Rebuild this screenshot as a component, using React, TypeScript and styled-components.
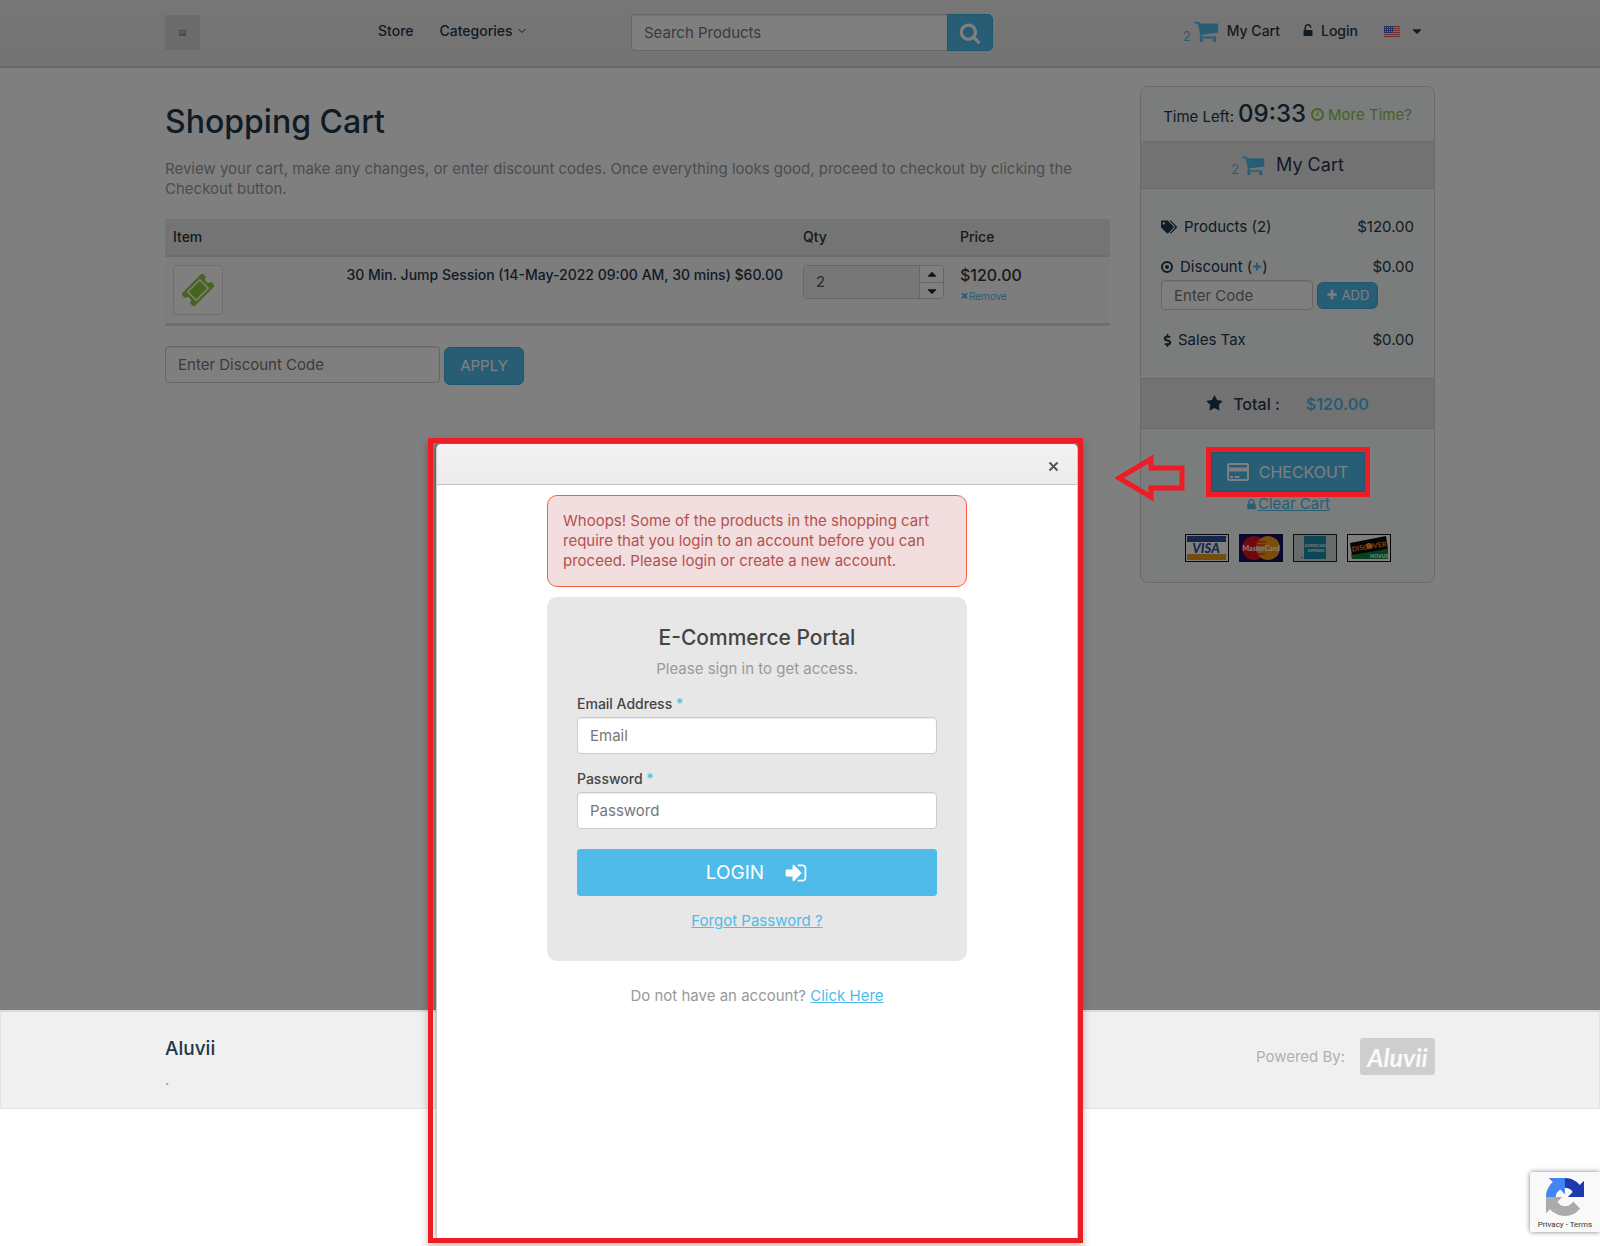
import React from "react";
import styled, { createGlobalStyle } from "styled-components";
import { FaCaretDown, FaCaretUp, FaDollarSign, FaTags } from "react-icons/fa";

const color = {
  ink: "#1e364a",
  text: "#333",
  muted: "#999",
  blue: "#4fbbea",
  blueEdge: "#3aaede",
  green: "#8cc63f",
  line: "#d4d4d4",
  mark: "#ee1c24",
};

const Global = createGlobalStyle`
  *, *::before, *::after { box-sizing: border-box; }
  body {
    margin: 0;
    background: #fff;
    color: ${color.muted};
    font: 400 15px/20px Inter, "Liberation Sans", sans-serif;
  }
  h1, h2, p { margin: 0; font-weight: 400; }
  input, button, select { font: inherit; }
  a { color: ${color.blue}; }
`;

/* ---------- icons ---------- */

const glyphs = {
  cart: "M640 1536q0 52-38 90t-90 38-90-38-38-90 38-90 90-38 90 38 38 90zm896 0q0 52-38 90t-90 38-90-38-38-90 38-90 90-38 90 38 38 90zm128-1088v512q0 24-16.500 42.500t-40.500 21.500l-1044 122q13 60 13 70 0 16-24 64h920q26 0 45 19t19 45-19 45-45 19h-1024q-26 0-45-19t-19-45q0-11 8-31.500t16-36 21.500-40 15.500-29.500l-177-823h-204q-26 0-45-19t-19-45 19-45 45-19h256q16 0 28.500 6.500t19.500 15.500 13 24.500 8 26 5.500 29.500 4.500 26h1201q26 0 45 19t19 45z",
  search:
    "M1216 832q0-185-131.500-316.500t-316.500-131.500-316.500 131.500-131.500 316.500 131.500 316.500 316.500 131.500 316.500-131.500 131.500-316.500zm512 832q0 52-38 90t-90 38q-54 0-90-38l-343-342q-179 124-399 124-143 0-273.500-55.500t-225-150-150-225-55.500-273.500 55.500-273.500 150-225 225-150 273.500-55.500 273.500 55.500 225 150 150 225 55.500 273.500q0 220-124 399l343 343q37 37 37 90z",
  signIn:
    "M1312 896q0 26-19 45l-544 544q-19 19-45 19t-45-19-19-45v-288h-448q-26 0-45-19t-19-45v-384q0-26 19-45t45-19h448v-288q0-26 19-45t45-19 45 19l544 544q19 19 19 45zm352-352v704q0 119-84.500 203.500t-203.500 84.500h-320q-13 0-22.500-9.500t-9.500-22.500q0-4-1-20t-.5-26.500 3-23.500 10-19.500 20.500-6.500h320q66 0 113-47t47-113v-704q0-66-47-113t-113-47h-312l-11.500-1-11.500-3-8-5.500-7-9-2-13.500q0-4-1-20t-.5-26.500 3-23.500 10-19.500 20.500-6.500h320q119 0 203.500 84.500t84.500 203.500z",
  star: "M1728 647q0 22-26 48l-363 354 86 500q1 7 1 20 0 21-10.500 35.500t-30.500 14.500q-19 0-40-12l-449-236-449 236q-22 12-40 12-21 0-31.500-14.500t-10.500-35.500q0-6 2-20l86-500-364-354q-25-27-25-48 0-37 56-46l502-73 225-455q19-41 49-41t49 41l225 455 502 73q56 9 56 46z",
  lock: "M640 768h512v-192q0-106-75-181t-181-75-181 75-75 181v192zm832 96v576q0 40-28 68t-68 28h-960q-40 0-68-28t-28-68v-576q0-40 28-68t68-28h32v-192q0-184 132-316t316-132 316 132 132 316v192h32q40 0 68 28t28 68z",
  unlock:
    "M1376 768q40 0 68 28t28 68v576q0 40-28 68t-68 28h-960q-40 0-68-28t-28-68v-576q0-40 28-68t68-28h32v-320q0-185 131.500-316.500t316.500-131.500 316.500 131.500 131.500 316.500q0 26-19 45t-45 19h-64q-26 0-45-19t-19-45q0-106-75-181t-181-75-181 75-75 181v320h736z",
  plus: "M1600 736v192q0 40-28 68t-68 28h-416v416q0 40-28 68t-68 28h-192q-40 0-68-28t-28-68v-416h-416q-40 0-68-28t-28-68v-192q0-40 28-68t68-28h416v-416q0-40 28-68t68-28h192q40 0 68 28t28 68v416h416q40 0 68 28t28 68z",
  times:
    "M1490 1322q0 40-28 68l-136 136q-28 28-68 28t-68-28l-294-294-294 294q-28 28-68 28t-68-28l-136-136q-28-28-28-68t28-68l294-294-294-294q-28-28-28-68t28-68l136-136q28-28 68-28t68 28l294 294 294-294q28-28 68-28t68 28l136 136q28 28 28 68t-28 68l-294 294 294 294q28 28 28 68z",
  clock:
    "M1024 544v448q0 14-9 23t-23 9h-320q-14 0-23-9t-9-23v-64q0-14 9-23t23-9h224v-352q0-14 9-23t23-9h64q14 0 23 9t9 23zm416 352q0-148-73-273t-198-198-273-73-273 73-198 198-73 273 73 273 198 198 273 73 273-73 198-198 73-273zm224 0q0 209-103 385.500t-279.500 279.500-385.500 103-385.500-103-279.500-279.500-103-385.500 103-385.500 279.500-279.500 385.500-103 385.500 103 279.500 279.500 103 385.500z",
};

function Icon({ name, size, fill = "currentColor" }: { name: keyof typeof glyphs; size: number; fill?: string }) {
  return (
    <svg width={size} height={size} viewBox="0 0 1792 1792" fill={fill} aria-hidden="true">
      <path d={glyphs[name]} />
    </svg>
  );
}

const DotCircle = () => (
  <svg width="12" height="12" viewBox="0 0 12 12" aria-hidden="true">
    <circle cx="6" cy="6" r="5" fill="none" stroke={color.ink} strokeWidth="2" />
    <circle cx="6" cy="6" r="2" fill={color.ink} />
  </svg>
);

const Chevron = () => (
  <svg width="10" height="6" viewBox="0 0 10 6" fill="none" stroke={color.ink} aria-hidden="true">
    <path d="M1.500 1L5 4.500L8.500 1" />
  </svg>
);

const CreditCard = () => (
  <svg width="22" height="18" viewBox="0 0 22 18" aria-hidden="true">
    <rect x="1" y="1" width="20" height="16" rx="1.500" fill="none" stroke="#fff" strokeWidth="2" />
    <path d="M1 6.500h20" stroke="#fff" strokeWidth="4" />
    <path d="M3 14h3M7.500 14h5" stroke="#fff" strokeWidth="2" />
  </svg>
);

const Ticket = () => (
  <svg width="32" height="32" viewBox="0 0 32 32" aria-hidden="true">
    <g transform="rotate(-45 16 16)">
      <path
        fill={color.green}
        d="M3.500 7h25a2.500 2.500 0 0 1 2.500 2.500v3a3.500 3.500 0 0 0 0 7v3a2.500 2.500 0 0 1-2.500 2.500h-25a2.500 2.500 0 0 1-2.500-2.500v-3a3.500 3.500 0 0 0 0-7v-3a2.500 2.500 0 0 1 2.500-2.500z"
      />
      <rect x="7.500" y="10" width="17" height="12" fill="none" stroke="#fff" strokeWidth="1.500" />
    </g>
  </svg>
);

const BrokenImage = () => (
  <svg width="7" height="6" viewBox="0 0 7 6" aria-hidden="true">
    <rect x=".5" y=".5" width="6" height="5" fill="#c4c4c4" stroke="#999" />
    <path d="M1 5l2-2 1 1 1-1 1.500 2z" fill="#888" />
  </svg>
);

const Flag = () => (
  <svg width="16" height="11" viewBox="0 0 16 11" aria-hidden="true">
    <rect width="16" height="11" fill="#f3e3e3" />
    <path d="M0 .5h16M0 2.500h16M0 4.500h16M0 6.500h16M0 8.500h16M0 10.500h16" stroke="#dd5a5a" />
    <rect width="9" height="7" fill="#3f62c8" />
    <path d="M1 1.500h7M1 3.500h7M1 5.500h7" stroke="#e4eafc" strokeDasharray="1 1" />
  </svg>
);

const RecaptchaMark = () => (
  <svg width="38" height="38" viewBox="0 0 64 64" aria-hidden="true">
    <path fill="#1c3aa9" d="M64 31.955l-.033-1.370V4.687l-7.160 7.160C50.948 4.674 42.033.093 32.050.093c-10.400 0-19.622 4.960-25.458 12.640l11.736 11.860a15.550 15.550 0 0 1 4.754-5.334c2.050-1.600 4.952-2.906 8.968-2.906.485 0 .860.057 1.135.163 4.976.393 9.288 3.140 11.828 7.124l-8.307 8.307L64 31.953" />
    <path fill="#4285f4" d="M31.862.094l-1.370.033H4.594l7.160 7.160C4.580 13.147 0 22.060 0 32.046c0 10.400 4.960 19.622 12.640 25.458L24.500 45.768a15.550 15.550 0 0 1-5.334-4.754c-1.600-2.050-2.906-4.952-2.906-8.968 0-.485.057-.860.163-1.135.393-4.976 3.140-9.288 7.124-11.828l8.307 8.307L31.860.095" />
    <path fill="#ababab" d="M.001 32.045l.033 1.370v25.898l7.160-7.160c5.860 7.173 14.774 11.754 24.760 11.754 10.400 0 19.622-4.960 25.458-12.640l-11.736-11.860a15.550 15.550 0 0 1-4.754 5.334c-2.050 1.600-4.952 2.906-8.968 2.906-.485 0-.860-.057-1.135-.163-4.976-.393-9.288-3.140-11.828-7.124l8.307-8.307c-10.522.040-22.400.066-27.295-.005" />
  </svg>
);

const VisaCard = () => (
  <svg width="44" height="28" viewBox="0 0 44 28" role="img" aria-label="Visa">
    <rect x=".5" y=".5" width="43" height="27" fill="#fff" stroke="#111" />
    <rect x="2" y="2" width="39" height="6" fill="#2a4f9e" />
    <rect x="2" y="20" width="39" height="6" fill="#e59b1c" />
    <text x="21" y="19" textAnchor="middle" fontFamily="Lato, sans-serif" fontSize="13" fontWeight="900" fontStyle="italic" fill="#2a4f9e">VISA</text>
  </svg>
);

const MasterCard = () => (
  <svg width="44" height="28" viewBox="0 0 44 28" role="img" aria-label="MasterCard">
    <rect width="44" height="28" fill="#14145c" />
    <circle cx="15" cy="14" r="12" fill="#e0101e" />
    <circle cx="29" cy="14" r="12" fill="#f59a1c" />
    <path d="M18 8h9M17 11h9M17 20h9" stroke="#e0101e" />
    <text x="22" y="17" textAnchor="middle" fontFamily="Lato, sans-serif" fontSize="7" fontWeight="900" fill="#fff">MasterCard</text>
  </svg>
);

const AmexCard = () => (
  <svg width="44" height="28" viewBox="0 0 44 28" role="img" aria-label="American Express">
    <rect x=".5" y=".5" width="43" height="27" fill="#cfd4d6" stroke="#222" />
    <rect x="11" y="2" width="22" height="23" fill="#1c8fa8" />
    <text x="22" y="13" textAnchor="middle" fontFamily="Lato, sans-serif" fontSize="4" fontWeight="700" fill="#e8f4f6">AMERICAN</text>
    <text x="23" y="18" textAnchor="middle" fontFamily="Lato, sans-serif" fontSize="4" fontWeight="700" fill="#e8f4f6">EXPRESS</text>
    <rect x="8" y="23" width="2" height="1" fill="#1c8fa8" />
  </svg>
);

const DiscoverCard = () => (
  <svg width="44" height="28" viewBox="0 0 44 28" role="img" aria-label="Discover Novus">
    <rect x=".5" y=".5" width="43" height="27" fill="#fff" stroke="#111" />
    <path d="M5 25L4 20L41 15V25z" fill="#15803d" />
    <path d="M3 9L39 2L41 15L5 21z" fill="#0a0a0a" />
    <g transform="rotate(-9 22 12)">
      <circle cx="22" cy="12" r="3" fill="#f7b500" />
      <text x="22" y="15" textAnchor="middle" fontFamily="Lato, sans-serif" fontSize="7" fontWeight="900" fill="#f07a30">DISCOVER</text>
    </g>
    <text x="32" y="24" textAnchor="middle" fontFamily="Lato, sans-serif" fontSize="5" fontWeight="900" fill="#fff">NOVUS</text>
  </svg>
);

/* ---------- page frame ---------- */

const Page = styled.div`
  position: relative;
  min-height: 100vh;
  overflow: hidden;
`;

const Shop = styled.div`
  position: relative;
  min-height: calc(100vh - 236px);
`;

const Dimmer = styled.div`
  position: absolute;
  inset: 0;
  z-index: 1;
  background: rgba(0, 0, 0, 0.5);
`;

const Container = styled.div`
  display: flex;
  max-width: 1270px;
  margin: 0 auto;
`;

/* ---------- header ---------- */

const Header = styled.header`
  border-bottom: 2px solid #cfcfcf;
  background: linear-gradient(#ededed, #e6e6e6);
`;

const HeaderRow = styled(Container)`
  height: 66px;
  align-items: flex-start;
`;

const Logo = styled.a`
  display: grid;
  place-items: center;
  width: 35px;
  height: 35px;
  margin-top: 15px;
  background: #d8d8d8;
`;

const Nav = styled.nav`
  display: flex;
  gap: 26px;
  width: 253px;
  margin: 21px 0 0 178px;
`;

const NavLink = styled.a`
  display: flex;
  align-items: center;
  gap: 4px;
  color: ${color.ink};
  font-size: 14px;
  font-weight: 500;
  text-decoration: none;
`;

const Search = styled.form`
  display: flex;
  width: 362px;
  margin-top: 14px;
`;

const TextInput = styled.input`
  width: 100%;
  height: 37px;
  padding: 0 12px;
  border: 1px solid #ccc;
  border-radius: 4px;
  background: #fff;
  box-shadow: inset 0 1px 1px rgba(0, 0, 0, 0.08);
  color: #555;
  &::placeholder {
    color: #777;
    opacity: 1;
  }
`;

const SearchInput = styled(TextInput)`
  flex: 1;
  border-right: 0;
  border-radius: 4px 0 0 4px;
`;

const BlueButton = styled.button`
  display: inline-flex;
  align-items: center;
  justify-content: center;
  border: 1px solid ${color.blueEdge};
  border-radius: 6px;
  background: ${color.blue};
  color: #fff;
  white-space: nowrap;
`;

const SearchButton = styled(BlueButton)`
  width: 46px;
  border-radius: 0 5px 5px 0;
`;

const Account = styled.div`
  display: flex;
  align-items: center;
  margin: 18px 11px 0 auto;
`;

const CartLink = styled.a`
  display: flex;
  align-items: center;
  gap: 7px;
  margin-right: 21px;
  color: ${color.text};
  font-size: 14px;
  font-weight: 500;
  text-decoration: none;
`;

const CartBadge = styled.span`
  display: inline-flex;
  align-items: flex-end;
  gap: 3px;
  color: ${color.blue};
  font-size: 13px;
  font-weight: 400;
  line-height: 16px;
`;

const LoginLink = styled(NavLink)`
  gap: 6px;
  margin-right: 26px;
`;

const LanguageButton = styled.button`
  display: flex;
  align-items: center;
  gap: 10px;
  padding: 0;
  border: 0;
  background: none;
  color: ${color.text};
  font-size: 14px;
`;

/* ---------- cart ---------- */

const Columns = styled(Container)`
  align-items: flex-start;
  gap: 30px;
  padding-top: 18px;
`;

const CartColumn = styled.main`
  flex: 1;
  min-width: 0;
  padding-top: 18px;
`;

const Title = styled.h1`
  color: ${color.ink};
  font-size: 32px;
  font-weight: 500;
  line-height: 36px;
`;

const Intro = styled.p`
  margin: 19px 0 20px;
`;

const Table = styled.table`
  width: 100%;
  border-collapse: collapse;
  border-bottom: 3px solid #dcdcdc;
  background: #fafafa;
  table-layout: fixed;
`;

const HeadCell = styled.th<{ $width?: string }>`
  width: ${(p) => p.$width ?? "auto"};
  height: 37px;
  padding: 0 8px;
  border-bottom: 2px solid #dcdcdc;
  background: #e8e8e8;
  color: ${color.text};
  font-size: 14px;
  font-weight: 500;
  text-align: left;
`;

const Cell = styled.td`
  padding: 8px;
  vertical-align: top;
`;

const ProductName = styled(Cell)`
  padding-right: 12px;
  color: ${color.ink};
  font-size: 14px;
  font-weight: 500;
  text-align: right;
`;

const Thumb = styled.div`
  display: grid;
  place-items: center;
  width: 50px;
  height: 50px;
  border: 1px solid #ddd;
  border-radius: 4px;
  background: #fff;
`;

const Stepper = styled.div`
  display: flex;
  height: 34px;
  overflow: hidden;
  border: 1px solid #ccc;
  border-radius: 4px;
`;

const QtyInput = styled.input`
  flex: 1;
  min-width: 0;
  padding: 0 12px;
  border: 0;
  background: #eee;
  color: #555;
`;

const StepButtons = styled.div`
  display: grid;
  grid-template-rows: 1fr 1fr;
  width: 24px;
  border-left: 1px solid #ccc;
`;

const StepButton = styled.button`
  display: grid;
  place-items: center;
  padding: 0;
  border: 0;
  background: #fff;
  color: #222;
  font-size: 14px;
  line-height: 10px;
  & + & {
    border-top: 1px solid #ccc;
  }
`;

const LinePrice = styled.div`
  color: ${color.text};
  font-size: 16px;
  font-weight: 500;
`;

const RemoveLink = styled.a`
  display: inline-flex;
  align-items: center;
  font-size: 10px;
  text-decoration: none;
`;

const DiscountForm = styled.form`
  display: flex;
  gap: 4px;
  margin-top: 20px;
`;

const DiscountInput = styled(TextInput)`
  width: 275px;
`;

const ApplyButton = styled(BlueButton)`
  width: 80px;
  height: 38px;
  margin-top: 1px;
`;

/* ---------- summary ---------- */

const Summary = styled.aside`
  width: 295px;
  border: 1px solid ${color.line};
  border-radius: 8px;
  background: #f4faf6;
  color: ${color.ink};
`;

const TimeRow = styled.div`
  display: flex;
  align-items: baseline;
  justify-content: center;
  gap: 4px;
  height: 55px;
  padding-top: 10px;
  border-bottom: 1px solid ${color.line};
`;

const Countdown = styled.span`
  font-size: 24px;
  font-weight: 500;
  line-height: 34px;
`;

const MoreTime = styled.a`
  display: inline-flex;
  align-items: center;
  gap: 3px;
  color: ${color.green};
  text-decoration: none;
`;

const Band = styled.div<{ $height: number }>`
  display: flex;
  align-items: center;
  justify-content: center;
  gap: 10px;
  height: ${(p) => p.$height}px;
  border-bottom: 1px solid ${color.line};
  background: repeating-conic-gradient(#e9e9e9 0 25%, #e3e3e3 0 50%) 0 0 / 2px 2px;
`;

const SummaryHeading = styled.h2`
  font-size: 18px;
`;

const Lines = styled.div`
  padding: 28px 20px;
  border-bottom: 1px solid ${color.line};
`;

const Line = styled.div`
  display: flex;
  justify-content: space-between;
`;

const ProductsLine = styled(Line)`
  margin-bottom: 20px;
`;

const LineLabel = styled.span<{ $gap: number }>`
  display: inline-flex;
  align-items: center;
  gap: ${(p) => p.$gap}px;
`;

const CodeForm = styled.form`
  display: flex;
  align-items: center;
  gap: 4px;
  margin: 3px 0 20px;
`;

const CodeInput = styled(TextInput)`
  width: 152px;
  height: 30px;
`;

const AddButton = styled(BlueButton)`
  gap: 4px;
  width: 61px;
  height: 27px;
  padding: 0;
  font-size: 13px;
`;

const Plus = styled.span`
  display: inline-flex;
  color: ${color.blue};
`;

const TotalLabel = styled.strong`
  margin-right: 16px;
  font-size: 16px;
  font-weight: 500;
`;

const TotalAmount = styled.strong`
  color: ${color.blue};
  font-size: 16px;
  font-weight: 600;
`;

const Pay = styled.div`
  display: flex;
  flex-direction: column;
  align-items: center;
  padding: 23px 0 20px;
`;

const CheckoutSlot = styled.div`
  position: relative;
`;

const CheckoutButton = styled(BlueButton)`
  gap: 10px;
  width: 154px;
  height: 40px;
  padding: 0;
  border-radius: 0;
  font-size: 16px;
`;

const CheckoutMark = styled.div`
  position: absolute;
  inset: -5px;
  z-index: 2;
  border: 5px solid ${color.mark};
`;

const ArrowMark = styled.svg`
  position: absolute;
  top: 2px;
  right: 180px;
  z-index: 2;
`;

const ClearLink = styled.a`
  display: inline-flex;
  align-items: center;
  margin: 2px 0 20px;
`;

const Cards = styled.div`
  display: flex;
  gap: 10px;
`;

/* ---------- footer ---------- */

const Footer = styled.footer`
  border: 1px solid #e4e4e4;
  border-top: 2px solid #dadada;
  background: #f0f0f0;
`;

const FooterRow = styled(Container)`
  justify-content: space-between;
  padding: 26px 0 18px;
`;

const Company = styled.h2`
  margin-bottom: 10px;
  color: ${color.ink};
  font-size: 19px;
  font-weight: 500;
  line-height: 22px;
`;

const PoweredBy = styled.div`
  display: flex;
  align-items: center;
  gap: 15px;
  height: 37px;
  color: #b0b0b0;
`;

const AluviiLogo = styled.span`
  display: grid;
  place-items: center;
  width: 75px;
  height: 37px;
  border-radius: 3px;
  background: #cecece;
  color: #fafafa;
  font: italic 700 25px/36px Lato, sans-serif;
`;

const RecaptchaBadge = styled.aside`
  position: absolute;
  right: 0;
  bottom: 14px;
  display: flex;
  flex-direction: column;
  align-items: center;
  gap: 3px;
  width: 70px;
  height: 60px;
  padding-top: 6px;
  border-radius: 2px 0 0 2px;
  background: #f9f9f9;
  box-shadow: 0 0 5px gray;
  color: #333;
  font: 8px/12px Roboto, sans-serif;
  a {
    color: inherit;
    text-decoration: none;
  }
`;

/* ---------- sign-in dialog ---------- */

const DialogMark = styled.div`
  position: absolute;
  top: 438px;
  left: calc(50% - 372px);
  z-index: 2;
  display: flex;
  width: 655px;
  height: 805px;
  padding: 6px 5px 5px 8px;
  box-shadow: 0 4px 8px rgba(0, 0, 0, 0.25);
  &::after {
    content: "";
    position: absolute;
    inset: 0;
    border: 5px solid ${color.mark};
    pointer-events: none;
  }
`;

const Dialog = styled.section`
  flex: 1;
  display: flex;
  flex-direction: column;
  align-items: center;
  border-left: 1px solid #c8c8c8;
  border-right: 1px solid #c8c8c8;
  border-radius: 5px 5px 0 0;
  background: #fff;
  box-shadow: 0 0 4px rgba(0, 0, 0, 0.4);
`;

const DialogBar = styled.div`
  display: flex;
  align-items: center;
  justify-content: flex-end;
  align-self: stretch;
  height: 41px;
  padding: 5px 18px 0;
  border-bottom: 1px solid #c4c4c4;
  border-radius: 5px 5px 0 0;
  background: linear-gradient(#f2f2f2, #ebebeb);
`;

const CloseButton = styled.button`
  display: grid;
  padding: 0;
  border: 0;
  background: none;
  color: #555;
`;

const Alert = styled.div`
  width: 420px;
  margin: 10px 0;
  padding: 15px;
  border: 1px solid #f5623a;
  border-radius: 10px;
  background: #f2dede;
  color: #b5504e;
`;

const LoginForm = styled.form`
  display: flex;
  flex-direction: column;
  width: 420px;
  margin-bottom: 25px;
  padding: 29px 30px 30px;
  border-radius: 10px;
  background: #e7e7e7;
  text-align: center;
`;

const LoginTitle = styled.h2`
  margin-bottom: 9px;
  color: #444;
  font-size: 21px;
  font-weight: 500;
  line-height: 24px;
`;

const FieldLabel = styled.label`
  margin: 15px 0 3px;
  color: #444;
  font-size: 14px;
  font-weight: 500;
  text-align: left;
  span {
    color: ${color.blue};
  }
`;

const LoginButton = styled(BlueButton)`
  gap: 20px;
  height: 47px;
  margin: 20px 0 15px;
  border-color: ${color.blue};
  border-radius: 3px;
  font-size: 19px;
`;

export default function App() {
  return (
    <Page>
      <Global />
      <Shop>
        <Header>
          <HeaderRow>
            <Logo href="#" aria-label="Home">
              <BrokenImage />
            </Logo>
            <Nav>
              <NavLink href="#">Store</NavLink>
              <NavLink href="#">
                Categories <Chevron />
              </NavLink>
            </Nav>
            <Search>
              <SearchInput placeholder="Search Products" aria-label="Search Products" />
              <SearchButton type="button" aria-label="Search">
                <Icon name="search" size={22} />
              </SearchButton>
            </Search>
            <Account>
              <CartLink href="#">
                <CartBadge>
                  2 <Icon name="cart" size={26} />
                </CartBadge>
                My Cart
              </CartLink>
              <LoginLink href="#">
                <Icon name="unlock" size={14} />
                Login
              </LoginLink>
              <LanguageButton aria-label="Language">
                <Flag />
                <FaCaretDown />
              </LanguageButton>
            </Account>
          </HeaderRow>
        </Header>

        <Columns>
          <CartColumn>
            <Title>Shopping Cart</Title>
            <Intro>
              Review your cart, make any changes, or enter discount codes. Once everything looks good, proceed to
              checkout by clicking the Checkout button.
            </Intro>
            <Table>
              <thead>
                <tr>
                  <HeadCell $width="10%">Item</HeadCell>
                  <HeadCell aria-label="Description" />
                  <HeadCell $width="157px">Qty</HeadCell>
                  <HeadCell $width="158px">Price</HeadCell>
                </tr>
              </thead>
              <tbody>
                <tr>
                  <Cell>
                    <Thumb>
                      <Ticket />
                    </Thumb>
                  </Cell>
                  <ProductName>30 Min. Jump Session (14-May-2022 09:00 AM, 30 mins) $60.00</ProductName>
                  <Cell>
                    <Stepper>
                      <QtyInput defaultValue="2" aria-label="Quantity" />
                      <StepButtons>
                        <StepButton aria-label="Increase">
                          <FaCaretUp />
                        </StepButton>
                        <StepButton aria-label="Decrease">
                          <FaCaretDown />
                        </StepButton>
                      </StepButtons>
                    </Stepper>
                  </Cell>
                  <Cell>
                    <LinePrice>$120.00</LinePrice>
                    <RemoveLink href="#">
                      <Icon name="times" size={9} />
                      Remove
                    </RemoveLink>
                  </Cell>
                </tr>
              </tbody>
            </Table>
            <DiscountForm>
              <DiscountInput placeholder="Enter Discount Code" aria-label="Discount code" />
              <ApplyButton type="button">APPLY</ApplyButton>
            </DiscountForm>
          </CartColumn>

          <Summary>
            <TimeRow>
              <span>Time Left:</span>
              <Countdown>09:33</Countdown>
              <MoreTime href="#">
                <Icon name="clock" size={15} />
                More Time?
              </MoreTime>
            </TimeRow>
            <Band $height={47}>
              <CartBadge>
                2 <Icon name="cart" size={24} />
              </CartBadge>
              <SummaryHeading>My Cart</SummaryHeading>
            </Band>
            <Lines>
              <ProductsLine>
                <LineLabel $gap={7}>
                  <FaTags size={16} />
                  Products (2)
                </LineLabel>
                <span>$120.00</span>
              </ProductsLine>
              <Line>
                <LineLabel $gap={7}>
                  <DotCircle />
                  <span>
                    Discount (
                    <Plus>
                      <Icon name="plus" size={10} />
                    </Plus>
                    )
                  </span>
                </LineLabel>
                <span>$0.00</span>
              </Line>
              <CodeForm>
                <CodeInput placeholder="Enter Code" aria-label="Discount code" />
                <AddButton type="button">
                  <Icon name="plus" size={12} />
                  ADD
                </AddButton>
              </CodeForm>
              <Line>
                <LineLabel $gap={4}>
                  <FaDollarSign size={13} />
                  Sales Tax
                </LineLabel>
                <span>$0.00</span>
              </Line>
            </Lines>
            <Band $height={50}>
              <Icon name="star" size={17} />
              <TotalLabel>Total :</TotalLabel>
              <TotalAmount>$120.00</TotalAmount>
            </Band>
            <Pay>
              <CheckoutSlot>
                <CheckoutButton>
                  <CreditCard />
                  CHECKOUT
                </CheckoutButton>
                <CheckoutMark />
                <ArrowMark width="70" height="48" viewBox="0 0 70 48" aria-hidden="true">
                  <path
                    d="M4 24L36 5V14H67V34H36V43Z"
                    fill="none"
                    stroke={color.mark}
                    strokeWidth="5"
                  />
                </ArrowMark>
              </CheckoutSlot>
              <ClearLink href="#">
                <Icon name="lock" size={13} />
                Clear Cart
              </ClearLink>
              <Cards>
                <VisaCard />
                <MasterCard />
                <AmexCard />
                <DiscoverCard />
              </Cards>
            </Pay>
          </Summary>
        </Columns>
        <Dimmer />
      </Shop>

      <Footer>
        <FooterRow>
          <div>
            <Company>Aluvii</Company>
            <p>.</p>
          </div>
          <PoweredBy>
            Powered By: <AluviiLogo>Aluvii</AluviiLogo>
          </PoweredBy>
        </FooterRow>
      </Footer>

      <RecaptchaBadge>
        <RecaptchaMark />
        <div>
          <a href="#">Privacy</a> - <a href="#">Terms</a>
        </div>
      </RecaptchaBadge>

      <DialogMark>
        <Dialog role="dialog" aria-label="Sign in">
          <DialogBar>
            <CloseButton aria-label="Close">
              <svg width="11" height="11" viewBox="0 0 11 11" stroke="currentColor" strokeWidth="2" aria-hidden="true">
                <path d="M1.500 1.500L9.500 9.500M9.500 1.500L1.500 9.500" />
              </svg>
            </CloseButton>
          </DialogBar>
          <Alert role="alert">
            Whoops! Some of the products in the shopping cart require that you login to an account before you can
            proceed. Please login or create a new account.
          </Alert>
          <LoginForm>
            <LoginTitle>E-Commerce Portal</LoginTitle>
            <p>Please sign in to get access.</p>
            <FieldLabel htmlFor="email">
              Email Address <span>*</span>
            </FieldLabel>
            <TextInput id="email" type="email" placeholder="Email" />
            <FieldLabel htmlFor="password">
              Password <span>*</span>
            </FieldLabel>
            <TextInput id="password" type="password" placeholder="Password" />
            <LoginButton type="button">
              LOGIN <Icon name="signIn" size={24} />
            </LoginButton>
            <a href="#">Forgot Password ?</a>
          </LoginForm>
          <p>
            Do not have an account? <a href="#">Click Here</a>
          </p>
        </Dialog>
      </DialogMark>
    </Page>
  );
}
